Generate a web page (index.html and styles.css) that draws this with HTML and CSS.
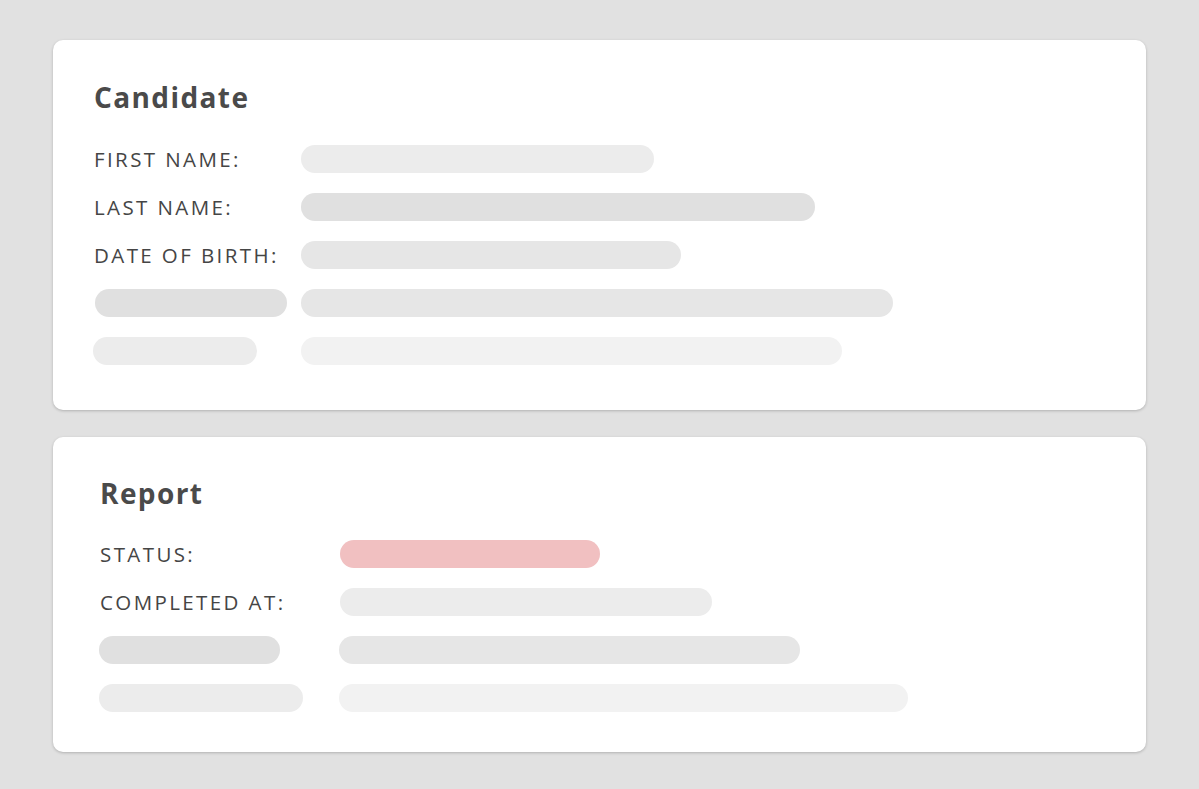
FILE: index.html
```html
<!DOCTYPE html>
<html lang="en">
<head>
<meta charset="utf-8">
<title>Candidate Report</title>
<link rel="stylesheet" href="styles.css">
</head>
<body>
<main class="page">
  <section class="card card-candidate">
    <h2 class="card-title">Candidate</h2>
    <div class="rows">
      <div class="row"><span class="label">FIRST NAME:</span><span class="bar c2" style="width:353px"></span></div>
      <div class="row"><span class="label">LAST NAME:</span><span class="bar c0" style="width:514px"></span></div>
      <div class="row"><span class="label">DATE OF BIRTH:</span><span class="bar c1" style="width:380px"></span></div>
      <div class="row"><span class="bar c0 lbar-in" style="width:192px"></span><span class="bar c1" style="width:592px"></span></div>
      <div class="row"><span class="bar c2 lbar-out" style="width:164px"></span><span class="bar c3" style="width:541px"></span></div>
    </div>
  </section>
  <section class="card card-report">
    <h2 class="card-title">Report</h2>
    <div class="rows">
      <div class="row"><span class="label">STATUS:</span><span class="bar pink shift" style="width:260px"></span></div>
      <div class="row"><span class="label">COMPLETED AT:</span><span class="bar c2 shift" style="width:372px"></span></div>
      <div class="row"><span class="bar c0 lbar-out" style="width:181px"></span><span class="bar c1" style="width:461px"></span></div>
      <div class="row"><span class="bar c2 lbar-out" style="width:204px"></span><span class="bar c3" style="width:569px"></span></div>
    </div>
  </section>
</main>
</body>
</html>
```
FILE: styles.css
```css
html, body {
  margin: 0;
  padding: 0;
  background: #e1e1e1;
}
body {
  font-family: "Open Sans", "DejaVu Sans", sans-serif;
  color: #4a4a4a;
}
.page {
  padding: 40px 53px;
  display: flex;
  flex-direction: column;
  gap: 27px;
}
.card {
  background: #ffffff;
  border-radius: 10px;
  box-shadow: 0 1px 3px rgba(0, 0, 0, 0.22);
}
.card-candidate {
  padding: 37px 40px 45px 41px;
  height: 370px;
  box-sizing: border-box;
}
.card-report {
  padding: 36px 40px 40px 47px;
  height: 315px;
  box-sizing: border-box;
}
.card-title {
  margin: 0;
  font-size: 28px;
  line-height: 40px;
  font-weight: 700;
  letter-spacing: 1.4px;
  color: #4a4a4a;
}
.card-candidate .card-title { margin-bottom: 28px; }
.card-report .card-title { margin-bottom: 27px; }
.rows {
  display: flex;
  flex-direction: column;
  gap: 20px;
}
.row {
  display: grid;
  align-items: center;
  height: 28px;
}
.card-candidate .row { grid-template-columns: 207px auto; }
.card-report .row { grid-template-columns: 239px auto; }
.label {
  font-size: 20.5px;
  letter-spacing: 2.4px;
  line-height: 28px;
  white-space: nowrap;
  color: #454545;
}
.bar {
  display: block;
  height: 28px;
  border-radius: 14px;
}
.lbar-in { margin-left: 1px; }
.lbar-out { margin-left: -1px; }
.shift { margin-left: 1px; }
.c0 { background: #e0e0e0; }
.c1 { background: #e6e6e6; }
.c2 { background: #ececec; }
.c3 { background: #f2f2f2; }
.pink { background: #f1c0c1; }
```
